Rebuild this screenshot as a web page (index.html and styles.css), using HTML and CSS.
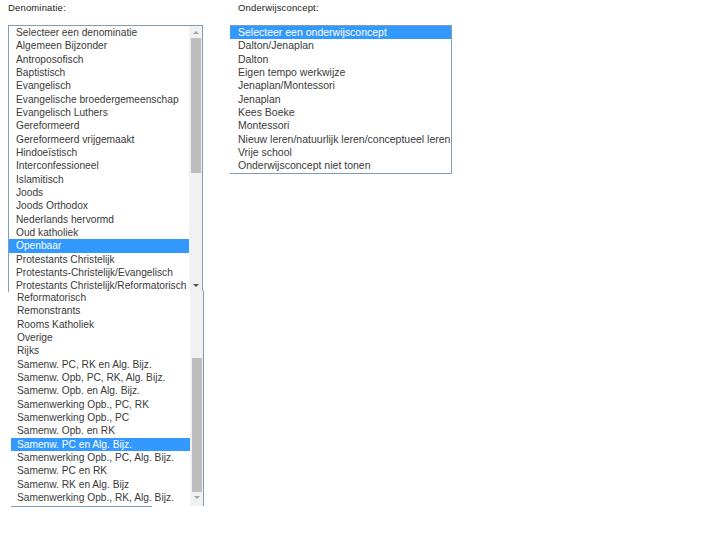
FILE: index.html
```html
<!DOCTYPE html>
<html lang="en">
  <head>
    <meta charset="UTF-8" />
    <title>Denominatie en onderwijsconcept</title>
    <link rel="stylesheet" href="styles.css">
  </head>
  <body>
    <div class="page">
      <div class="column column-left">
        <label class="field-label">Denominatie:</label>
        <div class="listbox listbox-first">
          <ul class="options">
            <li>Selecteer een denominatie</li>
            <li>Algemeen Bijzonder</li>
            <li>Antroposofisch</li>
            <li>Baptistisch</li>
            <li>Evangelisch</li>
            <li>Evangelische broedergemeenschap</li>
            <li>Evangelisch Luthers</li>
            <li>Gereformeerd</li>
            <li>Gereformeerd vrijgemaakt</li>
            <li>Hindoeïstisch</li>
            <li>Interconfessioneel</li>
            <li>Islamitisch</li>
            <li>Joods</li>
            <li>Joods Orthodox</li>
            <li>Nederlands hervormd</li>
            <li>Oud katholiek</li>
            <li class="selected">Openbaar</li>
            <li>Protestants Christelijk</li>
            <li>Protestants-Christelijk/Evangelisch</li>
            <li>Protestants Christelijk/Reformatorisch</li>
          </ul>
          <div class="scrollbar">
            <span class="arrow arrow-up"></span>
            <span class="thumb thumb-first"></span>
            <span class="arrow arrow-down arrow-dark"></span>
          </div>
        </div>
        <div class="listbox listbox-second">
          <ul class="options">
            <li>Reformatorisch</li>
            <li>Remonstrants</li>
            <li>Rooms Katholiek</li>
            <li>Overige</li>
            <li>Rijks</li>
            <li>Samenw. PC, RK en Alg. Bijz.</li>
            <li>Samenw. Opb, PC, RK, Alg. Bijz.</li>
            <li>Samenw. Opb. en Alg. Bijz.</li>
            <li>Samenwerking Opb., PC, RK</li>
            <li>Samenwerking Opb., PC</li>
            <li>Samenw. Opb. en RK</li>
            <li class="selected">Samenw. PC en Alg. Bijz.</li>
            <li>Samenwerking Opb., PC, Alg. Bijz.</li>
            <li>Samenw. PC en RK</li>
            <li>Samenw. RK en Alg. Bijz</li>
            <li>Samenwerking Opb., RK, Alg. Bijz.</li>
          </ul>
          <div class="scrollbar">
            <span class="thumb thumb-second"></span>
            <span class="arrow arrow-down"></span>
          </div>
        </div>
        <div class="under-line"></div>
      </div>

      <div class="column column-right">
        <label class="field-label field-label-right">Onderwijsconcept:</label>
        <div class="listbox listbox-concept">
          <ul class="options">
            <li class="selected">Selecteer een onderwijsconcept</li>
            <li>Dalton/Jenaplan</li>
            <li>Dalton</li>
            <li>Eigen tempo werkwijze</li>
            <li>Jenaplan/Montessori</li>
            <li>Jenaplan</li>
            <li>Kees Boeke</li>
            <li>Montessori</li>
            <li>Nieuw leren/natuurlijk leren/conceptueel leren</li>
            <li>Vrije school</li>
            <li>Onderwijsconcept niet tonen</li>
          </ul>
        </div>
      </div>
    </div>
  </body>
</html>
```
FILE: styles.css
```css
body {
  margin: 0;
  background-color: #fff;
  color: #3a3a3a;
  font-family: "Liberation Sans", Arial, sans-serif;
  font-size: 10.2px;
}

.page {
  display: flex;
  align-items: flex-start;
  padding-top: 2px;
}

.column {
  display: flex;
  flex-direction: column;
}
.column-left {
  width: 230px;
  padding-left: 8px;
  box-sizing: border-box;
}

.field-label {
  height: 23px;
  line-height: 11px;
  font-size: 9.5px;
  letter-spacing: 0.15px;
  color: #222;
}
.field-label-right {
  padding-left: 8px;
}

.listbox {
  display: flex;
  box-sizing: border-box;
  border: 1px solid #7f9db9;
}
.listbox-first {
  width: 195px;
  height: 267px;
  border-bottom: 0;
  overflow: hidden;
}
.listbox-second {
  width: 193px;
  height: 215px;
  margin-left: 3px;
  margin-top: -1px;
  border-left: 0;
  border-top: 0;
  border-bottom: 0;
  background-color: #fff;
}
.listbox-concept {
  width: 222px;
  height: 149px;
  border-left: 0;
  font-size: 10.5px;
}

.options {
  flex: 1;
  min-width: 0;
  margin: 0;
  padding: 0;
  list-style: none;
}
.options li {
  height: 13.33px;
  line-height: 13.33px;
  padding-left: 8px;
  white-space: nowrap;
}
.listbox-first .options li {
  padding-left: 7px;
}
.listbox-second .options li {
  padding-left: 6px;
}
.options .selected {
  background-color: #3399ff;
  color: #fff;
}

.scrollbar {
  display: flex;
  flex-direction: column;
  align-items: center;
  width: 13px;
  background-color: #f1f1f1;
}
.thumb {
  width: 10px;
  background-color: #bdbdbd;
}
.thumb-first {
  height: 135px;
}
.thumb-second {
  height: 134px;
  margin-top: 67px;
}
.arrow {
  width: 0;
  height: 0;
  border-left: 3px solid transparent;
  border-right: 3px solid transparent;
}
.arrow-up {
  margin: 5px 0 4px;
  border-bottom: 3px solid #a3a3a3;
}
.arrow-down {
  margin-top: 4px;
  border-top: 3px solid #a3a3a3;
}
.arrow-dark {
  margin-top: 111px;
  border-top-color: #505050;
}

.under-line {
  width: 141px;
  height: 1px;
  margin-left: 3px;
  background-color: #7f9db9;
}
```
